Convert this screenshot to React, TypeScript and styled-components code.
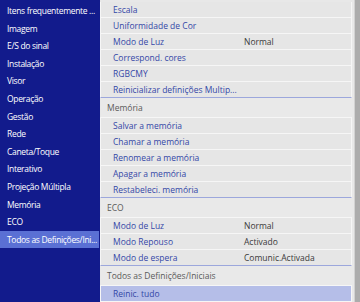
import { createGlobalStyle, styled } from "styled-components";

const GlobalStyle = createGlobalStyle`
  html, body {
    margin: 0;
    padding: 0;
    background: #e8e8e8;
  }
  body {
    font-family: "Open Sans", "Noto Sans", sans-serif;
  }
`;

const Frame = styled.div`
  display: flex;
  width: 360px;
  height: 302px;
  overflow: hidden;
  font-size: 8.5px;
`;

const Sidebar = styled.div`
  width: 100px;
  flex: none;
  padding-top: 2px;
  background: #121b8c;
  display: flex;
  flex-direction: column;
`;

const SideItem = styled.div<{ $active?: boolean }>`
  height: 17.6px;
  line-height: 17.6px;
  padding-left: 7px;
  margin-right: 1px;
  color: #ffffff;
  letter-spacing: -0.32px;
  white-space: nowrap;
  background: ${(p) => (p.$active ? "#5a70d4" : "transparent")};
`;

const Content = styled.div`
  flex: 1;
  padding-top: 2px;
  display: flex;
  flex-direction: column;
  background: #e8e8e8;
`;

const Header = styled.div`
  height: 19px;
  line-height: 19px;
  padding-left: 7px;
  margin-right: 2px;
  border-bottom: 1px solid #f6f6f6;
  color: #5a5a5a;
  white-space: nowrap;
  background: #e9e9e9;
`;

const Row = styled.div<{ $last?: boolean; $selected?: boolean }>`
  display: grid;
  grid-template-columns: 131px 1fr;
  height: 15px;
  line-height: 15px;
  padding-left: 12px;
  margin-right: 2px;
  border-left: 1px solid #f6f6f6;
  border-right: 1px solid #f6f6f6;
  border-bottom: 1px solid ${(p) => (p.$last ? "#9ca7dc" : "#f6f6f6")};
  background: ${(p) => (p.$selected ? "#b5bee8" : "#e6e6e6")};
  white-space: nowrap;
`;

const Label = styled.span`
  color: #3447a6;
`;

const Value = styled.span`
  color: #3a3a3a;
`;

const Scrollbar = styled.div`
  width: 5px;
  flex: none;
  background: #acacac;
  border-left: 1px solid #d2d2d2;
`;

const sideItems = [
  "Itens frequentemente ...",
  "Imagem",
  "E/S do sinal",
  "Instalação",
  "Visor",
  "Operação",
  "Gestão",
  "Rede",
  "Caneta/Toque",
  "Interativo",
  "Projeção Múltipla",
  "Memória",
  "ECO",
  "Todos as Definições/Ini...",
];

type Item = { label: string; value?: string; selected?: boolean };
type Group = { title?: string; items: Item[] };

const groups: Group[] = [
  {
    items: [
      { label: "Escala" },
      { label: "Uniformidade de Cor" },
      { label: "Modo de Luz", value: "Normal" },
      { label: "Correspond. cores" },
      { label: "RGBCMY" },
      { label: "Reinicializar definições Multip..." },
    ],
  },
  {
    title: "Memória",
    items: [
      { label: "Salvar a memória" },
      { label: "Chamar a memória" },
      { label: "Renomear a memória" },
      { label: "Apagar a memória" },
      { label: "Restabeleci. memória" },
    ],
  },
  {
    title: "ECO",
    items: [
      { label: "Modo de Luz", value: "Normal" },
      { label: "Modo Repouso", value: "Activado" },
      { label: "Modo de espera", value: "Comunic.Activada" },
    ],
  },
  {
    title: "Todos as Definições/Iniciais",
    items: [{ label: "Reinic. tudo", selected: true }],
  },
];

const App = () => {
  return (
    <>
      <GlobalStyle />
      <Frame>
        <Sidebar>
          {sideItems.map((s, i) => (
            <SideItem key={s} $active={i === sideItems.length - 1}>
              {s}
            </SideItem>
          ))}
        </Sidebar>
        <Content>
          {groups.map((g, gi) => (
            <div key={gi}>
              {g.title && <Header>{g.title}</Header>}
              {g.items.map((it, ii) => (
                <Row
                  key={it.label}
                  $last={ii === g.items.length - 1 && gi < groups.length - 1}
                  $selected={it.selected}
                >
                  <Label>{it.label}</Label>
                  {it.value && <Value>{it.value}</Value>}
                </Row>
              ))}
            </div>
          ))}
        </Content>
        <Scrollbar />
      </Frame>
    </>
  );
};

export default App;
